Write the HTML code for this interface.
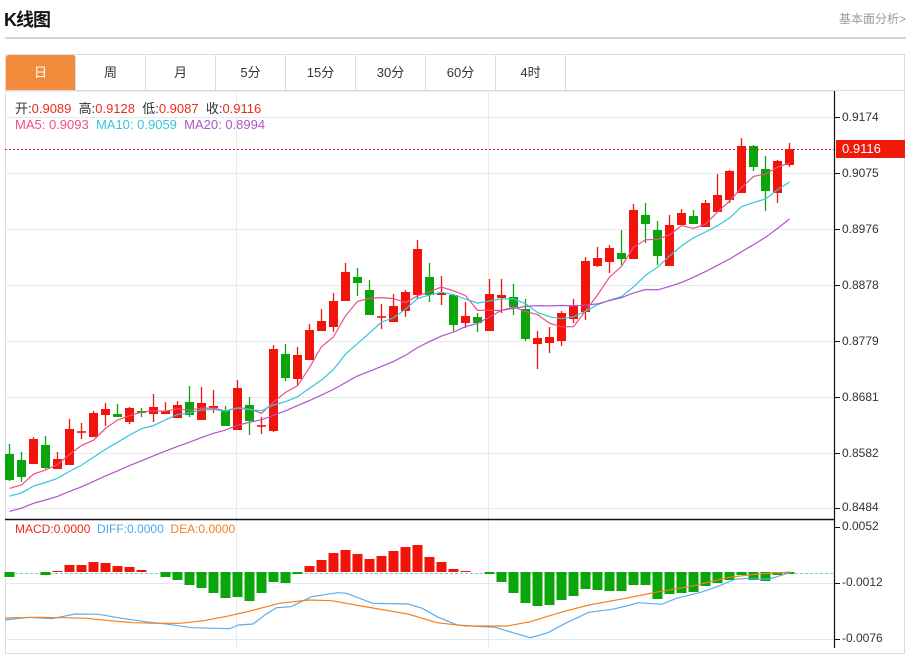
<!DOCTYPE html>
<html><head><meta charset="utf-8"><style>
*{margin:0;padding:0;box-sizing:border-box}
body{width:911px;height:648px;background:#fff;font-family:"Liberation Sans","Noto Sans CJK SC",sans-serif;position:relative;overflow:hidden}
.t{position:absolute;left:4px;top:6px;font-size:18px;font-weight:bold;color:#111;letter-spacing:-1px}
.more{position:absolute;right:5px;top:10px;font-size:12px;color:#999}
.hr{position:absolute;left:5px;right:5px;top:37px;height:2px;background:#d4d4d4}
.box{position:absolute;left:5px;top:54px;width:900px;height:600px;border:1px solid #dcdcdc}
.tabs{position:absolute;left:5px;top:54px;width:900px;height:37px;border:1px solid #dcdcdc;border-bottom:1px solid #dcdcdc}
.tab{position:absolute;top:0;height:35px;width:70px;border-right:1px solid #dcdcdc;text-align:center;line-height:35px;font-size:13px;color:#333}
.tab.on{background:#f28c3c;color:#fff;border-radius:3px 3px 0 0}
.info{position:absolute;left:15px;font-size:13px;white-space:pre}
svg{position:absolute;left:0;top:0}
</style></head><body>
<div class="t">K线图</div>
<div class="more">基本面分析&gt;</div>
<div class="hr"></div>
<div class="box"></div>
<div class="tabs">
<div class="tab on" style="left:0">日</div>
<div class="tab" style="left:70px">周</div>
<div class="tab" style="left:140px">月</div>
<div class="tab" style="left:210px">5分</div>
<div class="tab" style="left:280px">15分</div>
<div class="tab" style="left:350px">30分</div>
<div class="tab" style="left:420px">60分</div>
<div class="tab" style="left:490px">4时</div>
</div>
<svg id="c" width="911" height="648"></svg>
<div class="info" style="top:98px;color:#333">开:<span style="color:#f02a1a">0.9089</span>  高:<span style="color:#f02a1a">0.9128</span>  低:<span style="color:#f02a1a">0.9087</span>  收:<span style="color:#f02a1a">0.9116</span></div>
<div class="info" style="top:117px"><span style="color:#ee4f86">MA5: 0.9093</span>  <span style="color:#36c6dc">MA10: 0.9059</span>  <span style="color:#b055c8">MA20: 0.8994</span></div>
<div class="info" style="top:522px;font-size:12px"><span style="color:#f02a1a">MACD:0.0000</span>  <span style="color:#4aa8f0">DIFF:0.0000</span>  <span style="color:#f5801e">DEA:0.0000</span></div>
<div style="position:absolute;left:842px;top:89px;font-size:12px;color:#333;line-height:56px">0.9174<br>0.9075<br>0.8976<br>0.8878<br>0.8779<br>0.8681<br>0.8582</div>
<div style="position:absolute;left:836px;top:140px;width:69px;height:18px;background:#f01a0a"></div>
<div style="position:absolute;left:842px;top:141px;font-size:13px;color:#fff">0.9116</div>
<div style="position:absolute;left:842px;top:500px;font-size:12px;color:#333">0.8484</div>
<div style="position:absolute;left:842px;top:519px;font-size:12px;color:#333">0.0052</div>
<div style="position:absolute;left:842px;top:575px;font-size:12px;color:#333">-0.0012</div>
<div style="position:absolute;left:842px;top:631px;font-size:12px;color:#333">-0.0076</div>
<script>
var s=document.getElementById('c'),h='';
function L(x1,y1,x2,y2,c,w,d){h+='<line x1="'+x1+'" y1="'+y1+'" x2="'+x2+'" y2="'+y2+'" stroke="'+c+'" stroke-width="'+(w||1)+'"'+(d?' stroke-dasharray="'+d+'"':'')+'/>';}
[117,173,229,285,341,397,453,508,583,639].forEach(function(y){L(5,y+.5,835,y+.5,'#e3eaf0');});
L(236.5,91,236.5,648,'#e3eaf0');L(488.5,91,488.5,648,'#e3eaf0');
L(5,91.5,835,91.5,'#e3eaf0');
var D=[[454,480,444,481],[460,477,452,482],[464,439,437,464],[445,468,436,469],[469,459,452,469],[465,429,419,465],[432,432,423,439],[437,413,411,437],[415,409,403,426],[414,417,404,417],[422,408,407,424],[411,413,408,417],[414,407,394,422],[414,411,402,414],[418,405,401,418],[402,415,386,417],[420,403,387,420],[408,406,390,413],[410,426,406,426],[430,388,380,430],[405,421,397,435],[426,426,417,434],[431,349,345,432],[354,378,344,381],[379,355,347,385],[360,330,324,360],[331,321,309,331],[327,301,293,332],[301,272,263,301],[277,283,268,296],[290,315,280,315],[317,317,304,329],[322,306,294,322],[311,292,290,317],[295,249,240,299],[277,295,263,302],[295,293,276,305],[295,325,295,331],[323,316,302,328],[317,323,313,332],[331,294,279,331],[298,295,279,313],[297,307,284,315],[309,339,299,341],[344,338,331,369],[343,337,327,353],[341,313,311,346],[319,306,299,323],[312,261,257,320],[266,258,247,267],[262,248,245,273],[253,259,230,265],[259,210,204,259],[215,224,203,243],[230,256,221,265],[266,225,215,266],[225,213,209,225],[216,224,210,224],[227,203,200,227],[212,195,174,212],[200,171,170,203],[193,146,138,193],[146,167,145,171],[169,191,156,211],[193,161,160,203],[165,149,143,167]];
var R='#f2140a',G='#0aa50a';
D.forEach(function(d,i){var x=9.5+12*i,c=d[1]<=d[0]?R:G;L(x,d[2],x,d[3],c,1.3);var t=Math.min(d[0],d[1]),b=Math.max(d[0],d[1]);if(b-t<1.5){t-=.8;b+=.8;}h+='<rect x="'+(x-4.5)+'" y="'+t+'" width="9" height="'+(b-t)+'" fill="'+c+'"/>';});
var cl=[];for(var k=0;k<19;k++)cl.push(540-k*3);D.forEach(function(d){cl.push(d[1]);});
function ma(n,c){var p='';for(var i=0;i<D.length;i++){var j=i+19,sm=0;for(var m=0;m<n;m++)sm+=cl[j-m];var y=sm/n;if(y>512)continue;p+=(p?'L':'M')+(9.5+12*i)+','+y.toFixed(1);}h+='<path d="'+p+'" fill="none" stroke="'+c+'" stroke-width="1.2"/>';}
ma(5,'#ee4f86');ma(10,'#36c6dc');ma(20,'#b055c8');
L(5,149.5,835,149.5,'#e0201a',1,'2,2');
L(5,519.5,835,519.5,'#111',1.5);
L(834.5,91,834.5,648,'#111',1.2);
[117,173,229,285,341,397,453,508,527,583,639].forEach(function(y){L(835,y+.5,840,y+.5,'#111');});
L(5,573.5,835,573.5,'#7cc8e0',1,'3,2');
var M=[[0,577],[3,575],[4,571],[5,565],[6,565],[7,562],[8,563],[9,566],[10,567],[11,570],[13,577],[14,580],[15,585],[16,588],[17,593],[18,598],[19,597],[20,601],[21,593],[22,582],[23,583],[24,574],[25,566],[26,560],[27,553],[28,550],[29,554],[30,559],[31,556],[32,551],[33,547],[34,545],[35,557],[36,562],[37,569],[38,571],[40,574],[41,582],[42,593],[43,603],[44,606],[45,605],[46,600],[47,596],[48,589],[49,590],[50,591],[51,591],[52,585],[53,585],[54,599],[55,594],[56,593],[57,592],[58,586],[59,583],[60,580],[61,575],[62,580],[63,581],[64,575],[65,574]];
M.forEach(function(m){var x=9.5+12*m[0],y=m[1],z=572,t=Math.min(y,z),b=Math.max(y,z);h+='<rect x="'+(x-5)+'" y="'+t+'" width="10" height="'+Math.max(b-t,1)+'" fill="'+(y<z?R:G)+'"/>';});
function pl(a,c){var p='';a.forEach(function(q,i){p+=(i?'L':'M')+(5+q[0]/1.713).toFixed(1)+','+(500+q[1]/3).toFixed(1);});h+='<path d="'+p+'" fill="none" stroke="'+c+'" stroke-width="1.2"/>';}
pl([[0,360],[40,352],[80,356],[120,342],[160,343],[200,355],[240,365],[280,373],[320,383],[360,385],[385,386],[400,375],[425,372],[445,345],[465,323],[490,320],[525,290],[570,278],[585,280],[630,310],[690,312],[715,325],[740,350],[775,375],[800,378],[840,382],[870,398],[900,413],[930,398],[960,370],[1000,337],[1040,328],[1065,318],[1085,308],[1125,313],[1150,295],[1190,278],[1220,260],[1250,238],[1270,235],[1290,237],[1310,237],[1330,226],[1346,217]],'#5aaef0');
pl([[0,354],[60,352],[100,353],[140,355],[180,362],[220,368],[260,370],[300,370],[340,362],[380,349],[420,333],[470,310],[520,300],[560,302],[600,315],[640,327],[690,342],[740,368],[790,378],[860,378],[900,365],[950,338],[1000,315],[1060,296],[1120,275],[1180,257],[1240,232],[1290,222],[1346,216]],'#f5801e');
s.innerHTML=h;
</script>
</body></html>
